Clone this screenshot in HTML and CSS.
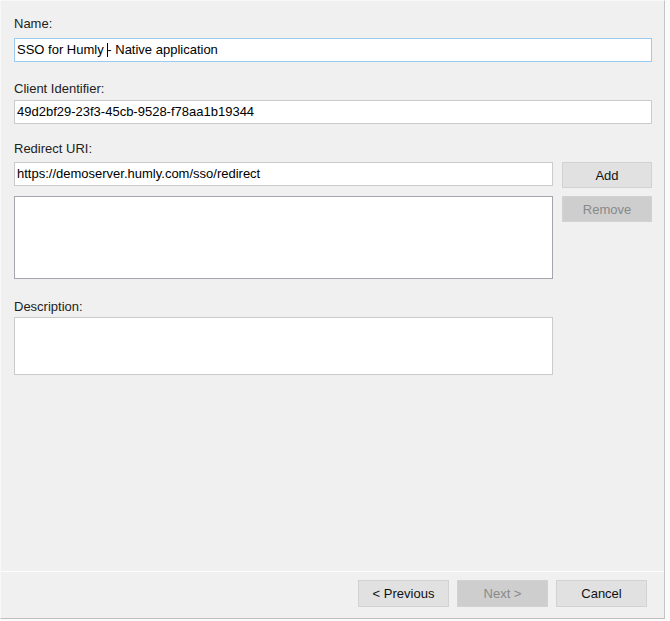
FILE: index.html
```html
<!DOCTYPE html>
<html lang="en">
<head>
    <meta charset="UTF-8">
    <title>Client</title>
    <link rel="stylesheet" href="styles.css">
</head>
<body>
<div class="dialog">
    <div class="main">
        <label class="label name-label">Name:</label>
        <div class="field focused">SSO for Humly <span class="caret"></span>- Native application</div>

        <label class="label client-label">Client Identifier:</label>
        <div class="field">49d2bf29-23f3-45cb-9528-f78aa1b19344</div>

        <label class="label uri-label">Redirect URI:</label>
        <div class="uri-row">
            <div class="uri-col">
                <div class="field">https://demoserver.humly.com/sso/redirect</div>
                <div class="list"></div>
            </div>
            <div class="uri-buttons">
                <button class="btn">Add</button>
                <button class="btn" disabled>Remove</button>
            </div>
        </div>

        <label class="label desc-label">Description:</label>
        <div class="memo"></div>
    </div>
    <div class="footer">
        <button class="btn wide">&lt; Previous</button>
        <button class="btn wide" disabled>Next &gt;</button>
        <button class="btn wide">Cancel</button>
    </div>
</div>
</body>
</html>
```

FILE: styles.css
```css
html, body{
    margin: 0;
    padding: 0;
    background-color: #fbfbfb;
}
body{
    font-family: "Liberation Sans", Arial, sans-serif;
    font-size: 13px;
    color: #1b1b1b;
}
.dialog{
    box-sizing: border-box;
    width: 665px;
    height: 619px;
    display: flex;
    flex-direction: column;
    background-color: #f0f0f0;
    border-top: 1px solid #f8f8f8;
    border-left: 1px solid #f8f8f8;
    border-right: 1px solid #c4c4c4;
    border-bottom: 1px solid #bdbdbd;
}
.main{
    flex: 1;
    display: flex;
    flex-direction: column;
    padding: 15px 0 0 13px;
}
.label{
    display: block;
    line-height: 15px;
    color: #222;
}
.name-label{
    margin-bottom: 7px;
}
.client-label{
    margin-top: 19px;
    margin-bottom: 4px;
}
.uri-label{
    margin-top: 17px;
    margin-bottom: 6px;
}
.desc-label{
    margin-top: 20px;
    margin-bottom: 3px;
}
.field{
    box-sizing: border-box;
    width: 638px;
    height: 24px;
    line-height: 22px;
    padding: 0 2px;
    background-color: #fff;
    border: 1px solid #cbcbcb;
    color: #000;
    white-space: nowrap;
}
.field.focused{
    border-color: #9ccbf0;
}
.caret{
    display: inline-block;
    width: 1px;
    height: 14px;
    margin-right: -1px;
    vertical-align: -3px;
    background-color: #000;
}
.uri-row{
    display: flex;
    gap: 9px;
}
.uri-col{
    width: 539px;
    display: flex;
    flex-direction: column;
}
.uri-col .field{
    width: 539px;
}
.list{
    box-sizing: border-box;
    height: 83px;
    margin-top: 10px;
    background-color: #fff;
    border: 1px solid #a3a7ad;
}
.uri-buttons{
    display: flex;
    flex-direction: column;
    gap: 8px;
}
.btn{
    box-sizing: border-box;
    width: 90px;
    height: 26px;
    margin: 0;
    padding: 0;
    font-family: inherit;
    font-size: 13px;
    color: #111;
    background-color: #e1e1e1;
    border: 1px solid #d2d2d2;
    border-radius: 0;
}
.btn:disabled{
    color: #898989;
    background-color: #cecece;
    border-color: #d2d2d2;
}
.memo{
    box-sizing: border-box;
    width: 539px;
    height: 58px;
    background-color: #fff;
    border: 1px solid #cbcbcb;
}
.footer{
    height: 47px;
    display: flex;
    justify-content: flex-end;
    align-items: flex-start;
    gap: 8px;
    padding: 8px 17px 0 0;
    box-sizing: border-box;
    border-top: 1px solid #fdfdfd;
}
.btn.wide{
    width: 91px;
    height: 27px;
}
```
